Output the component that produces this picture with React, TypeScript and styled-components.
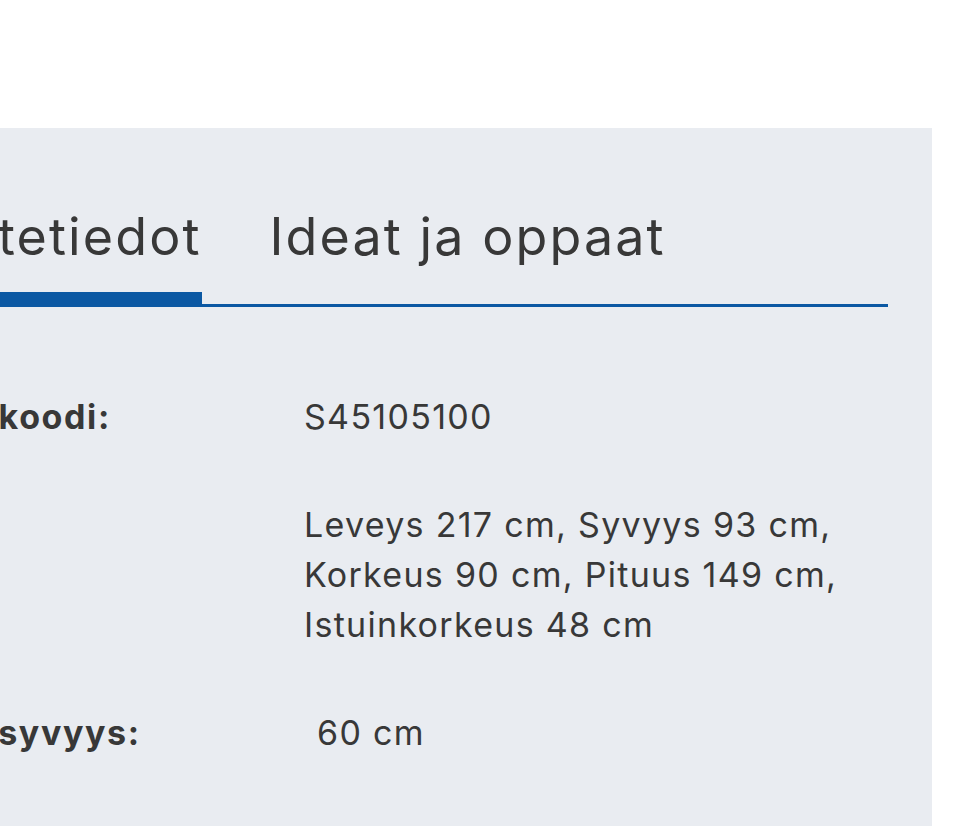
import React from "react";
import styled, { createGlobalStyle } from "styled-components";

const GlobalStyle = createGlobalStyle`
  html, body {
    margin: 0;
    padding: 0;
    background: #ffffff;
  }

  body {
    font-family: Inter, "Open Sans", "DejaVu Sans", sans-serif;
    color: #383838;
    overflow: hidden;
  }
`;

const Page = styled.div`
  width: 960px;
  height: 826px;
  padding-top: 128px;
  box-sizing: border-box;
  overflow: hidden;
`;

const Panel = styled.section`
  margin-left: -120px;
  width: 1052px;
  box-sizing: border-box;
  padding: 83px 44px 80px 20px;
  background: #e9ecf1;
`;

const TabBar = styled.nav`
  display: flex;
  align-items: flex-end;
  gap: 68px;
  border-bottom: 3px solid #0b58a3;
`;

const Tab = styled.button<{ $active?: boolean }>`
  font-family: inherit;
  font-size: 52px;
  line-height: 52px;
  letter-spacing: 2.1px;
  font-weight: 400;
  color: #383838;
  background: none;
  border: 0;
  padding: 0 0 29px;
  margin-bottom: -3px;
  border-bottom: 15px solid ${(p) => (p.$active ? "#0b58a3" : "transparent")};
  cursor: pointer;
`;

const Specs = styled.dl`
  margin: 85px 0 0;
  display: grid;
  grid-template-columns: 404px 1fr;
  row-gap: 58px;
  font-size: 34px;
  line-height: 50px;
  letter-spacing: 1.3px;
`;

const Label = styled.dt`
  font-weight: 700;
  letter-spacing: 1.6px;
  margin: 0 0 0 -4px;
`;

const Value = styled.dd<{ $indent?: number }>`
  margin: 0;
  padding-left: ${(p) => p.$indent ?? 0}px;
  max-width: 580px;
`;

const specs = [
  { label: "Tuotekoodi:", value: "S45105100" },
  {
    label: "Mitat:",
    value: "Leveys 217 cm, Syvyys 93 cm, Korkeus 90 cm, Pituus 149 cm, Istuinkorkeus 48 cm",
  },
  { label: "Istuinsyvyys:", value: "60 cm", indent: 13 },
  { label: "Verhoilu:", value: "Kangas" },
];

const App = () => {
  return (
    <>
      <GlobalStyle />
      <Page>
        <Panel>
          <TabBar>
            <Tab $active>Tuotetiedot</Tab>
            <Tab>Ideat ja oppaat</Tab>
          </TabBar>
          <Specs>
            {specs.map((row) => (
              <React.Fragment key={row.label}>
                <Label>{row.label}</Label>
                <Value $indent={row.indent}>{row.value}</Value>
              </React.Fragment>
            ))}
          </Specs>
        </Panel>
      </Page>
    </>
  );
};

export default App;
